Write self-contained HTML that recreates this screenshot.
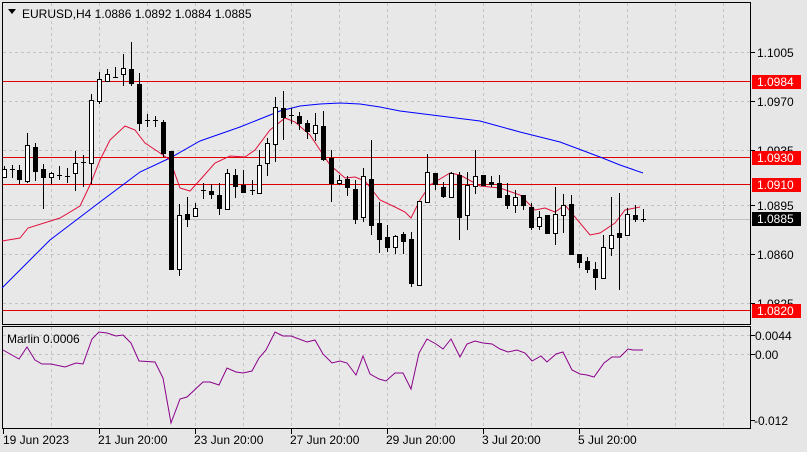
<!DOCTYPE html>
<html><head><meta charset="utf-8"><style>
html,body{margin:0;padding:0;background:#e6e6e6;width:807px;height:452px;overflow:hidden}
svg{display:block;font-family:"Liberation Sans",sans-serif;font-size:12px}
.w{fill:#fff;stroke:#000}.b{fill:#000;stroke:#000}
</style></head><body>
<svg width="807" height="452" viewBox="0 0 807 452">
<rect x="0" y="0" width="807" height="452" fill="#e6e6e6"/>
<rect x="2.5" y="2.5" width="748" height="322" fill="#e8e8e8" stroke="#000"/>
<rect x="2.5" y="326.5" width="748" height="102" fill="#e8e8e8" stroke="#000"/>
<g stroke="#c4c4c4" stroke-dasharray="3,3">
<path d="M3 52.5H750M3 101.5H750M3 150.5H750M3 205.5H750M3 254.5H750M3 303.5H750M3 335.5H750M3 354.5H750"/>
<path d="M51.5 3V324M99.5 3V324M147.5 3V324M195.5 3V324M243.5 3V324M291.5 3V324M339.5 3V324M387.5 3V324M435.5 3V324M483.5 3V324M531.5 3V324M579.5 3V324M627.5 3V324M675.5 3V324M723.5 3V324"/>
<path d="M51.5 327V428M99.5 327V428M147.5 327V428M195.5 327V428M243.5 327V428M291.5 327V428M339.5 327V428M387.5 327V428M435.5 327V428M483.5 327V428M531.5 327V428M579.5 327V428M627.5 327V428M675.5 327V428M723.5 327V428"/>
</g>
<path d="M3 219.5H750" stroke="#c0c0c0"/>
<path d="M3 81.5H750M3 157.5H750M3 184.5H750M3 310.5H750" stroke="#e00000"/>
<polyline fill="none" stroke="#0000ff" points="2,288 50,240 100,202 140,172 170,158 200,141 240,127 260,119 280,111 300,106 320,104 340,103 360,104 380,107 400,111 440,116 480,121 520,132 560,142 600,157 620,165 643,173"/>
<polyline fill="none" stroke="#e0103c" points="2,241 20,238 28,228 60,218 80,206 90,185 100,160 110,140 125,126 135,130 145,143 160,153 170,160 180,188 190,191 200,180 215,163 230,156 245,157 255,150 270,130 285,118 295,122 310,135 320,150 330,165 345,178 355,177 365,181 380,200 395,207 405,212 411,218 420,200 430,185 450,173 460,175 480,186 500,188 520,195 535,210 545,208 555,212 565,205 590,235 600,233 615,223 625,210 640,207"/>
<path stroke="#000" fill="none" d="M4.5 166V178M12.5 165V178M19.5 165V184M27.5 133V183M35.5 143V181M43.5 164V209M51.5 172V184M59.5 166V180M67.5 168V183M75.5 151V191M83.5 155V187M91.5 94V184M99.5 72V104M107.5 69V82M115.5 67V78M123.5 54V86M131.5 42V86M139.5 73V131M147.5 114V127M155.5 116V127M163.5 120V157M171.5 151V270M179.5 204V276M187.5 197V227M195.5 203V217M203.5 183V199M211.5 184V199M219.5 183V215M227.5 169V209M235.5 169V198M243.5 170V193M252.5 180V195M259.5 150V193M267.5 138V176M275.5 97V162M283.5 91V140M291.5 108V124M299.5 112V130M307.5 120V139M315.5 113V141M323.5 111V161M331.5 150V202M339.5 175V185M347.5 176V196M355.5 180V224M363.5 168V222M371.5 140V235M379.5 202V253M387.5 225V252M395.5 235V254M403.5 232V254M411.5 232V287M419.5 201V286M427.5 154V203M435.5 173V190M443.5 182V198M451.5 172V198M459.5 172V240M467.5 172V230M475.5 150V194M483.5 175V186M491.5 176V187M499.5 175V198M507.5 183V209M515.5 190V213M523.5 195V210M531.5 203V230M539.5 211V230M547.5 215V234M555.5 187V245M563.5 194V233M571.5 195V254M579.5 254V268M587.5 257V273M595.5 262V290M603.5 235V279M611.5 197V256M619.5 193V290M627.5 208V236M635.5 205V222M643.5 209V222
M10 169.5H15M57 175.5H62M65 176.5H70M81 162.5H86M113 77.5H118M145 120.5H150M153 120.5H158M201 190.5H206M250 190.5H255M289 115.5H294M641 219.5H646"/>
<g class="w">
<rect x="2.5" y="169.5" width="4" height="8"/><rect x="25.5" y="145.5" width="4" height="36"/><rect x="49.5" y="173.5" width="4" height="4"/><rect x="73.5" y="163.5" width="4" height="10"/><rect x="89.5" y="100.5" width="4" height="63"/><rect x="97.5" y="79.5" width="4" height="22"/><rect x="105.5" y="74.5" width="4" height="7"/><rect x="121.5" y="68.5" width="4" height="6"/><rect x="177.5" y="215.5" width="4" height="54"/><rect x="193.5" y="208.5" width="4" height="8"/><rect x="225.5" y="173.5" width="4" height="36"/><rect x="257.5" y="165.5" width="4" height="28"/><rect x="265.5" y="143.5" width="4" height="20"/><rect x="273.5" y="107.5" width="4" height="37"/><rect x="313.5" y="125.5" width="4" height="8"/><rect x="337.5" y="180.5" width="4" height="3"/><rect x="361.5" y="176.5" width="4" height="41"/><rect x="393.5" y="236.5" width="4" height="11"/><rect x="417.5" y="201.5" width="4" height="84"/><rect x="425.5" y="172.5" width="4" height="30"/><rect x="449.5" y="173.5" width="4" height="24"/><rect x="465.5" y="185.5" width="4" height="30"/><rect x="473.5" y="176.5" width="4" height="10"/><rect x="513.5" y="197.5" width="4" height="8"/><rect x="537.5" y="217.5" width="4" height="9"/><rect x="553.5" y="214.5" width="4" height="19"/><rect x="561.5" y="205.5" width="4" height="10"/><rect x="601.5" y="247.5" width="4" height="31"/><rect x="609.5" y="235.5" width="4" height="13"/><rect x="625.5" y="214.5" width="4" height="21"/>
</g>
<g class="b">
<rect x="17.5" y="170.5" width="4" height="9"/><rect x="33.5" y="147.5" width="4" height="24"/><rect x="41.5" y="169.5" width="4" height="8"/><rect x="129.5" y="69.5" width="4" height="14"/><rect x="137.5" y="84.5" width="4" height="39"/><rect x="161.5" y="122.5" width="4" height="31"/><rect x="169.5" y="151.5" width="4" height="118"/><rect x="185.5" y="214.5" width="4" height="5"/><rect x="209.5" y="191.5" width="4" height="3"/><rect x="217.5" y="195.5" width="4" height="13"/><rect x="233.5" y="175.5" width="4" height="11"/><rect x="241.5" y="185.5" width="4" height="7"/><rect x="281.5" y="108.5" width="4" height="9"/><rect x="297.5" y="116.5" width="4" height="7"/><rect x="305.5" y="123.5" width="4" height="8"/><rect x="321.5" y="126.5" width="4" height="33"/><rect x="329.5" y="158.5" width="4" height="25"/><rect x="345.5" y="179.5" width="4" height="8"/><rect x="353.5" y="189.5" width="4" height="30"/><rect x="369.5" y="179.5" width="4" height="46"/><rect x="377.5" y="223.5" width="4" height="16"/><rect x="385.5" y="237.5" width="4" height="10"/><rect x="401.5" y="234.5" width="4" height="7"/><rect x="409.5" y="239.5" width="4" height="44"/><rect x="433.5" y="173.5" width="4" height="11"/><rect x="441.5" y="187.5" width="4" height="9"/><rect x="457.5" y="175.5" width="4" height="42"/><rect x="481.5" y="175.5" width="4" height="10"/><rect x="489.5" y="182.5" width="4" height="2"/><rect x="497.5" y="183.5" width="4" height="14"/><rect x="505.5" y="195.5" width="4" height="10"/><rect x="521.5" y="195.5" width="4" height="10"/><rect x="529.5" y="207.5" width="4" height="20"/><rect x="545.5" y="215.5" width="4" height="18"/><rect x="569.5" y="204.5" width="4" height="50"/><rect x="577.5" y="254.5" width="4" height="8"/><rect x="585.5" y="261.5" width="4" height="8"/><rect x="593.5" y="269.5" width="4" height="8"/><rect x="617.5" y="233.5" width="4" height="4"/><rect x="633.5" y="215.5" width="4" height="4"/>
</g>
<polyline fill="none" stroke="#8b008b" points="3,350 19,359 27,347 35,360 42,364 51,364 65,367 76,363 83,364 92,339 99,332 107,333 116,336 123,335 131,343 139,361 155,362 163,378 171,423 180,399 187,397 203,382 210,382 219,385 227,368 236,372 243,373 252,371 259,358 266,350 275,332 283,336 291,336 307,342 315,340 323,354 332,363 340,361 347,363 356,375 363,356 370,374 379,379 386,381 395,373 403,373 411,389 419,353 427,339 436,344 443,349 451,339 460,357 467,344 475,341 483,343 492,344 500,349 508,352 517,350 525,353 532,361 541,356 547,362 556,354 563,352 572,370 580,374 587,375 594,377 604,363 612,357 620,357 628,349 633,350 643,350"/>
<path d="M8 9L16 9L12 14Z" fill="#000"/>
<text x="22" y="18">EURUSD,H4  1.0886 1.0892 1.0884 1.0885</text>
<text x="7" y="343">Marlin 0.0006</text>
<path stroke="#000" d="M751 52.5H755M751 101.5H755M751 150.5H755M751 205.5H755M751 254.5H755M751 303.5H755M751 335.5H755M751 354.5H755M751 420.5H755M3.5 429V434M99.5 429V434M195.5 429V434M291.5 429V434M387.5 429V434M483.5 429V434M579.5 429V434"/>
<g fill="#000">
<text x="757" y="57">1.1005</text><text x="757" y="106">1.0970</text><text x="757" y="155">1.0935</text><text x="757" y="210">1.0895</text><text x="757" y="259">1.0860</text><text x="757" y="308">1.0825</text>
<text x="755" y="340">0.0044</text><text x="755" y="359">0.00</text><text x="754" y="425">-0.012</text>
<text x="3" y="444">19 Jun 2023</text><text x="98" y="444">21 Jun 20:00</text><text x="194" y="444">23 Jun 20:00</text><text x="290" y="444">27 Jun 20:00</text><text x="386" y="444">29 Jun 20:00</text><text x="482" y="444">3 Jul 20:00</text><text x="578" y="444">5 Jul 20:00</text>
</g>
<rect x="752" y="75" width="49" height="14" fill="#ff0000"/><text x="757" y="86" fill="#fff">1.0984</text>
<rect x="752" y="151" width="49" height="14" fill="#ff0000"/><text x="757" y="162" fill="#fff">1.0930</text>
<rect x="752" y="178" width="49" height="14" fill="#ff0000"/><text x="757" y="189" fill="#fff">1.0910</text>
<rect x="752" y="212" width="49" height="14" fill="#000"/><text x="757" y="223" fill="#fff">1.0885</text>
<rect x="752" y="304" width="49" height="14" fill="#ff0000"/><text x="757" y="315" fill="#fff">1.0820</text>
</svg>
</body></html>
